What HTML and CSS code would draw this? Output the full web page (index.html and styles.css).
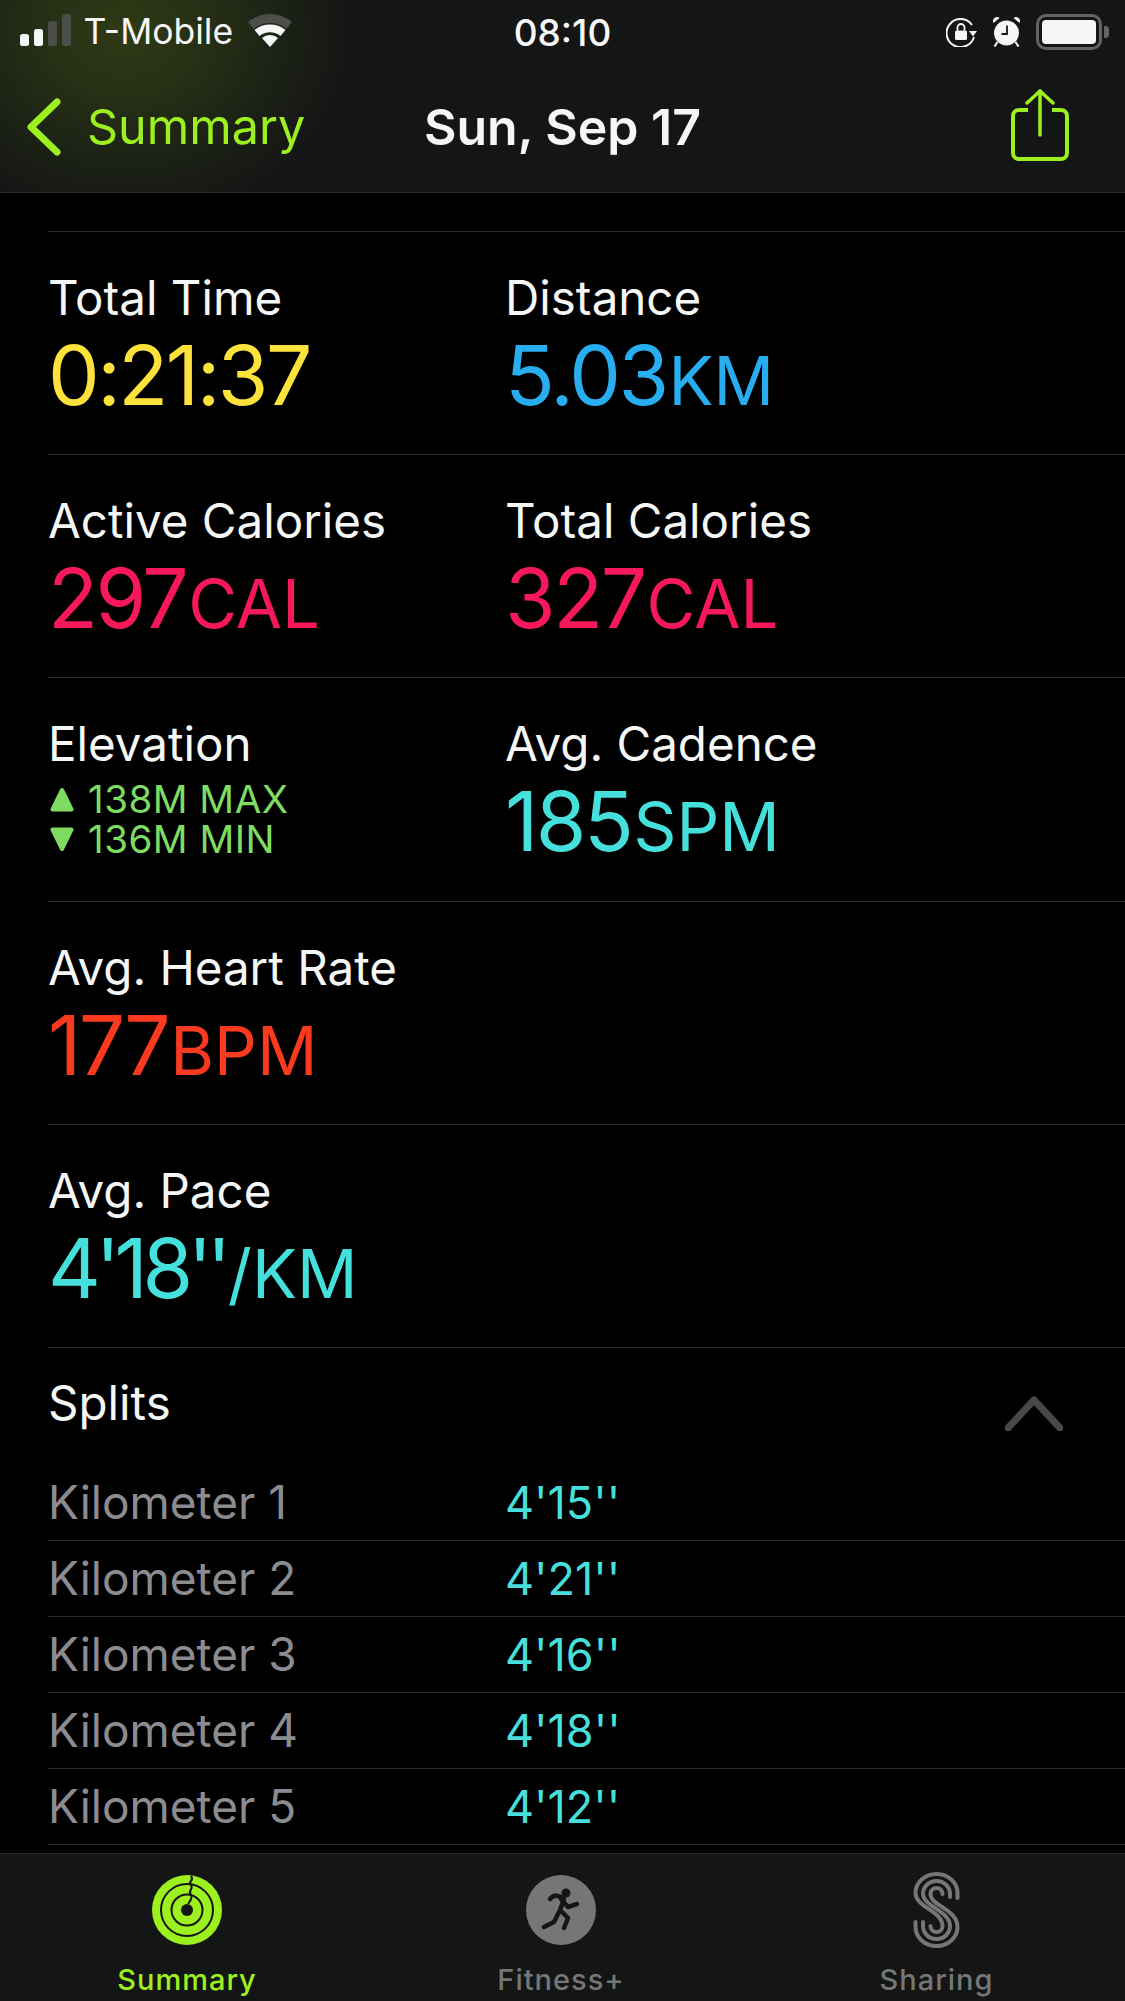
FILE: index.html
```html
<!DOCTYPE html>
<html lang="en">
<head>
    <meta charset="UTF-8">
    <meta name="viewport" content="width=device-width, initial-scale=1.0">
    <title>Workout Details</title>
    <link rel="stylesheet" href="styles.css">
</head>
<body>
    <div id="wrapper">
        <header class="topBar">
            <div class="statusBar">
                <div class="statusLeft">
                    <div class="signal">
                        <span class="bar on b1"></span>
                        <span class="bar on b2"></span>
                        <span class="bar b3"></span>
                        <span class="bar b4"></span>
                    </div>
                    <span class="carrier">T-Mobile</span>
                    <svg class="wifi" width="46" height="34" viewBox="0 0 46 34">
                        <path d="M1 9 A34 34 0 0 1 45 9 L39.500 16 A26 26 0 0 0 6.500 16 Z" fill="#4b4e4a"/>
                        <path d="M7.500 17 A25 25 0 0 1 38.500 17 L33.500 23 A17 17 0 0 0 12.500 23 Z" fill="#f5f7f6"/>
                        <path d="M15 25 A12 12 0 0 1 31 25 L23 34 Z" fill="#f5f7f6"/>
                    </svg>
                </div>
                <span class="clock">08:10</span>
                <div class="statusRight">
                    <svg width="31" height="30" viewBox="0 0 31 30">
                        <path d="M26 8 A14 14 0 1 0 28 20" fill="none" stroke="#f5f7f6" stroke-width="2"/>
                        <path d="M23 14 L31 14 L27 19.500 Z" fill="#f5f7f6"/>
                        <rect x="9" y="13.500" width="12" height="9.500" rx="1.500" fill="#f5f7f6"/>
                        <path d="M11.500 13.500 V10.500 A3.500 3.500 0 0 1 18.500 10.500 V13.500" fill="none" stroke="#f5f7f6" stroke-width="1.800"/>
                    </svg>
                    <svg width="27" height="31" viewBox="0 0 27 31">
                        <circle cx="13.500" cy="16" r="12.500" fill="#f5f7f6"/>
                        <path d="M0.500 6 A4 4 0 0 1 6.500 1 Z M26.500 6 A4 4 0 0 0 20.500 1 Z" fill="#f5f7f6"/>
                        <path d="M4.500 25 L1.500 29.500 M22.500 25 L25.500 29.500" stroke="#f5f7f6" stroke-width="2.200"/>
                        <path d="M14 8.500 V17 H8.500" fill="none" stroke="#141515" stroke-width="1.800"/>
                    </svg>
                    <div class="battery">
                        <div class="batteryBody"><span class="batteryFill"></span></div>
                        <span class="batteryCap"></span>
                    </div>
                </div>
            </div>
            <nav class="navBar">
                <a class="backLink">
                    <svg width="36" height="58" viewBox="0 0 36 58">
                        <path d="M31 4 L5 29 L31 54" fill="none" stroke="#9df01f" stroke-width="7" stroke-linecap="round" stroke-linejoin="round"/>
                    </svg>
                    <span>Summary</span>
                </a>
                <h1 class="navTitle">Sun, Sep 17</h1>
                <svg class="shareIcon" width="58" height="72" viewBox="0 0 58 72">
                    <path d="M17 21 H8 A6 6 0 0 0 2 27 V64 A6 6 0 0 0 8 70 H50 A6 6 0 0 0 56 64 V27 A6 6 0 0 0 50 21 H41" fill="none" stroke="#9df01f" stroke-width="4"/>
                    <path d="M29 2 V46" fill="none" stroke="#9df01f" stroke-width="3.500" stroke-linecap="round"/>
                    <path d="M16 14 L29 2 L42 14" fill="none" stroke="#9df01f" stroke-width="3.500" stroke-linecap="round" stroke-linejoin="round"/>
                </svg>
            </nav>
        </header>

        <main class="content">
            <section class="row">
                <div class="stat">
                    <p class="label">Total Time</p>
                    <p class="value yellow">0:21:37</p>
                </div>
                <div class="stat">
                    <p class="label">Distance</p>
                    <p class="value blue">5.03<span class="unit">KM</span></p>
                </div>
            </section>
            <section class="row">
                <div class="stat">
                    <p class="label">Active Calories</p>
                    <p class="value pink">297<span class="unit">CAL</span></p>
                </div>
                <div class="stat">
                    <p class="label">Total Calories</p>
                    <p class="value pink">327<span class="unit">CAL</span></p>
                </div>
            </section>
            <section class="row">
                <div class="stat">
                    <p class="label">Elevation</p>
                    <p class="elev">
                        <svg class="tri" width="24" height="25" viewBox="0 0 24 25"><path d="M12 3 L21.500 22.500 H2.500 Z" fill="#7fdc62" stroke="#7fdc62" stroke-width="4" stroke-linejoin="round"/></svg>
                        138M MAX
                    </p>
                    <p class="elev">
                        <svg class="tri" width="24" height="25" viewBox="0 0 24 25"><path d="M2.500 2.500 H21.500 L12 22 Z" fill="#7fdc62" stroke="#7fdc62" stroke-width="4" stroke-linejoin="round"/></svg>
                        136M MIN
                    </p>
                </div>
                <div class="stat">
                    <p class="label">Avg. Cadence</p>
                    <p class="value cyan">185<span class="unit">SPM</span></p>
                </div>
            </section>
            <section class="row">
                <div class="stat">
                    <p class="label">Avg. Heart Rate</p>
                    <p class="value red">177<span class="unit">BPM</span></p>
                </div>
            </section>
            <section class="row">
                <div class="stat">
                    <p class="label">Avg. Pace</p>
                    <p class="value cyan tightPace">4'18''<span class="unit">/KM</span></p>
                </div>
            </section>

            <section class="splits">
                <div class="splitsHead">
                    <p class="label">Splits</p>
                    <svg width="58" height="36" viewBox="0 0 58 36">
                        <path d="M3 33 L29 5 L55 33" fill="none" stroke="#48484a" stroke-width="7" stroke-linecap="round" stroke-linejoin="round"/>
                    </svg>
                </div>
                <div class="split"><span class="km">Kilometer 1</span><span class="pace">4'15''</span></div>
                <div class="split"><span class="km">Kilometer 2</span><span class="pace">4'21''</span></div>
                <div class="split"><span class="km">Kilometer 3</span><span class="pace">4'16''</span></div>
                <div class="split"><span class="km">Kilometer 4</span><span class="pace">4'18''</span></div>
                <div class="split"><span class="km">Kilometer 5</span><span class="pace">4'12''</span></div>
            </section>
        </main>

        <footer class="tabBar">
            <div class="tab active">
                <svg width="70" height="70" viewBox="0 0 70 70">
                    <circle cx="35" cy="35" r="35" fill="#9df01f"/>
                    <circle cx="35" cy="35" r="26" fill="none" stroke="#141515" stroke-width="2"/>
                    <circle cx="35" cy="35" r="15.500" fill="none" stroke="#141515" stroke-width="2"/>
                    <circle cx="35" cy="35" r="6" fill="#141515"/>
                    <path d="M39 1 C43 6 35 6 39 10 C42 14 35 16 39 20 C41 23 38 26 36 29" fill="none" stroke="#141515" stroke-width="2"/>
                </svg>
                <span>Summary</span>
            </div>
            <div class="tab">
                <svg width="70" height="70" viewBox="0 0 70 70">
                    <circle cx="35" cy="35" r="35" fill="#757777"/>
                    <circle cx="40" cy="18" r="4.500" fill="#141515"/>
                    <path d="M24 24 C28 19 33 20 38 24 L34 35 L42 43 L38 53 M35 24 L42 32 L51 29 M33 37 L28 47 L18 52" fill="none" stroke="#141515" stroke-width="4.500" stroke-linecap="round" stroke-linejoin="round"/>
                </svg>
                <span>Fitness+</span>
            </div>
            <div class="tab">
                <svg class="sharingIcon" width="49" height="76" viewBox="0 0 49 76">
                    <path d="M45.500 26 V21 A21 19 0 0 0 3.500 21 C3.500 35 30.500 39 30.500 54 A6 6 0 0 1 18.500 54" fill="none" stroke="#757777" stroke-width="4" stroke-linecap="round"/>
                    <path d="M38 25 V22 A13.500 13 0 0 0 11 22 C11 34 38 39 38 54 A13.500 13 0 0 1 11 54 V50" fill="none" stroke="#757777" stroke-width="4" stroke-linecap="round"/>
                    <path d="M30.500 22 A6 6 0 0 0 18.500 22 C18.500 34 45.500 37 45.500 55 A21 19 0 0 1 3.500 55 V50" fill="none" stroke="#757777" stroke-width="4" stroke-linecap="round"/>
                </svg>
                <span>Sharing</span>
            </div>
        </footer>
    </div>
</body>
</html>
```

FILE: styles.css
```css
*{
    margin: 0;
    padding: 0;
    box-sizing: border-box;
}
html, body{
    background-color: #000000;
}
body{
    font-family: Inter, "Liberation Sans", sans-serif;
    color: #f5f7f6;
    overflow: hidden;
}
#wrapper{
    width: 1125px;
    height: 2001px;
    display: flex;
    flex-direction: column;
    overflow: hidden;
}
.topBar{
    height: 193px;
    flex: none;
    border-bottom: 1px solid #2b2c2c;
    background-color: #141515;
    background-image: radial-gradient(ellipse 230px 195px at 125px 30px, #2f3a15 0%, #272f15 35%, #1b2015 72%, rgba(20,21,21,0) 100%);
}
.statusBar{
    height: 64px;
    padding: 0 16px 0 20px;
    display: flex;
    align-items: center;
    justify-content: space-between;
    position: relative;
}
.statusLeft{
    display: flex;
    align-items: center;
}
.signal{
    display: flex;
    align-items: flex-end;
    gap: 5.5px;
    height: 32px;
    margin-top: -4px;
    margin-right: 13px;
}
.bar{
    width: 8.500px;
    border-radius: 2.500px;
    background-color: #4b4e48;
}
.bar.on{
    background-color: #f5f7f6;
}
.b1{ height: 12px; }
.b2{ height: 17px; }
.b3{ height: 25px; }
.b4{ height: 32px; }
.carrier{
    font-size: 35.500px;
    line-height: 38px;
    margin-right: 14px;
}
.wifi{
    margin-top: -4px;
}
.clock{
    position: absolute;
    left: 0;
    right: 0;
    text-align: center;
    font-size: 37px;
    font-weight: 500;
}
.statusRight{
    display: flex;
    align-items: center;
    gap: 16px;
}
.battery{
    display: flex;
    align-items: center;
    gap: 2px;
}
.batteryBody{
    width: 66px;
    height: 36px;
    border: 3px solid #626463;
    border-radius: 10px;
    padding: 3px;
}
.batteryFill{
    display: block;
    height: 100%;
    background-color: #f5f7f6;
    border-radius: 4px;
}
.batteryCap{
    width: 5px;
    height: 12px;
    background-color: #626463;
    border-radius: 0 3px 3px 0;
}
.navBar{
    height: 128px;
    padding: 0 56px 3px 26px;
    display: flex;
    align-items: center;
    justify-content: space-between;
    position: relative;
}
.backLink{
    display: flex;
    align-items: center;
    gap: 25px;
    color: #9df01f;
    font-size: 48.500px;
}
.navTitle{
    position: absolute;
    left: 0;
    right: 0;
    text-align: center;
    font-size: 50px;
    font-weight: 600;
}
.shareIcon{
    margin-top: -3px;
}
.content{
    flex: 1;
    padding: 38px 0 0 48px;
    min-height: 0;
    overflow: hidden;
}
.row{
    height: 223.200px;
    padding-top: 36px;
    border-top: 1px solid #2e2e2f;
    display: grid;
    grid-template-columns: 457px 1fr;
}
.label{
    font-size: 47.500px;
    line-height: 60px;
}
.stat .label{
    margin-bottom: 4px;
}
.value{
    font-size: 82px;
    line-height: 88px;
    font-weight: 400;
    letter-spacing: -2.500px;
}
.tightPace{
    letter-spacing: -5.500px;
}
.unit{
    font-size: 67px;
    letter-spacing: 0;
    margin-left: 2px;
}
.yellow{ color: #fce23a; }
.blue{ color: #28aef0; }
.pink{ color: #f5195c; }
.cyan{ color: #45dfdc; }
.red{ color: #fa3a1f; }
.elev{
    color: #7fdc62;
    font-size: 38.500px;
    line-height: 40px;
    display: flex;
    align-items: center;
    letter-spacing: 0.500px;
    position: relative;
    top: 1px;
}
.tri{
    margin: 0 14px 0 2px;
}
.splits{
    border-top: 1px solid #2e2e2f;
}
.splitsHead{
    height: 117px;
    padding: 25px 62px 0 0;
    display: flex;
    justify-content: space-between;
}
.splitsHead svg{
    margin-top: 22px;
}
.split{
    height: 76px;
    border-bottom: 1px solid #2e2e2f;
    display: grid;
    grid-template-columns: 457px 1fr;
    font-size: 46px;
    line-height: 75px;
}
.km{
    color: #8c8c90;
}
.pace{
    color: #45dfdc;
    font-size: 45px;
}
.tabBar{
    height: 148px;
    flex: none;
    border-top: 1px solid #2b2c2c;
    background-color: #141515;
    display: grid;
    grid-template-columns: 374px 374px 377px;
    padding-top: 21px;
}
.tab{
    display: flex;
    flex-direction: column;
    align-items: center;
    color: #757777;
    font-size: 29px;
    font-weight: 500;
    letter-spacing: 1px;
    height: 122px;
    justify-content: space-between;
}
.tab.active{
    color: #9df01f;
}
.sharingIcon{
    margin: -3px 0;
}
```
